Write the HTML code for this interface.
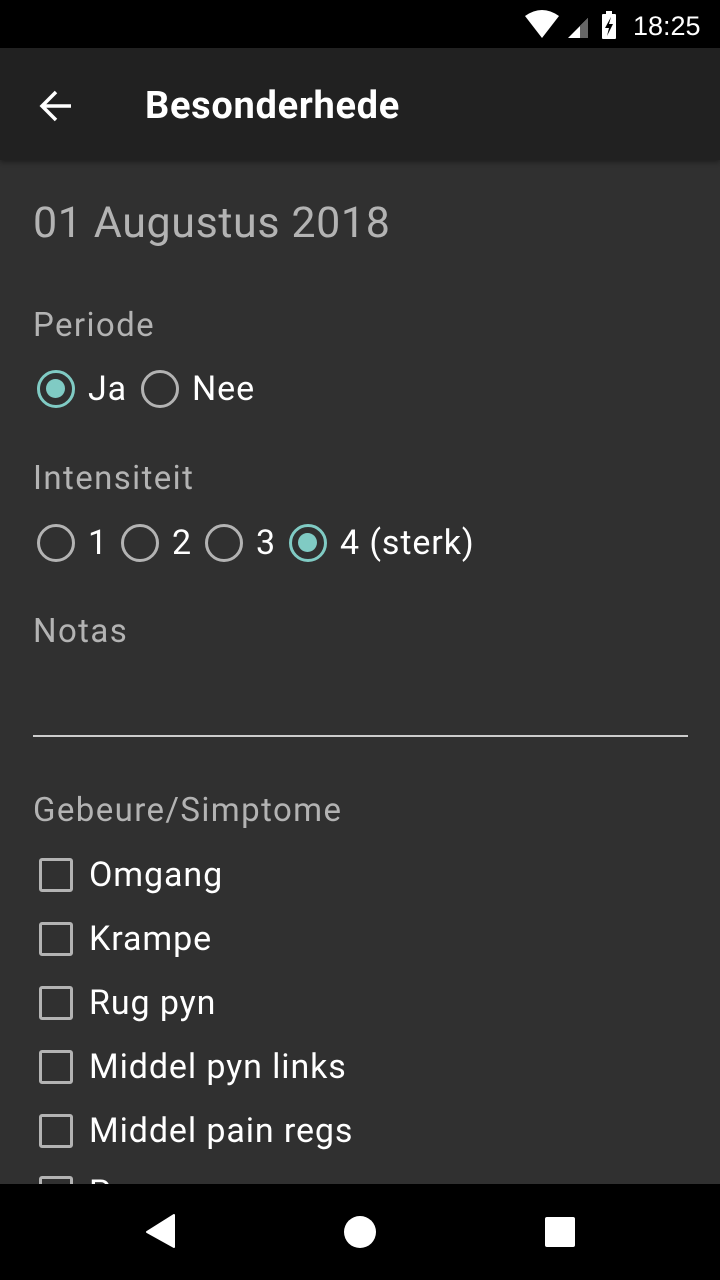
<!DOCTYPE html>
<html><head><meta charset="utf-8"><style>
*{margin:0;padding:0;box-sizing:border-box}
body{width:720px;height:1280px;background:#303030;font-family:"Roboto","Liberation Sans",sans-serif;position:relative;overflow:hidden}
.a{position:absolute;white-space:nowrap}
.lbl{color:#b3b3b3;font-size:33px;letter-spacing:1.4px;line-height:40px}
.t{color:#fff;font-size:34px;letter-spacing:0.9px;line-height:40px}
.r{position:absolute;width:38px;height:38px;border:3.5px solid #b3b3b3;border-radius:50%}
.r.on{border-color:#80cbc4}
.r.on::after{content:"";position:absolute;left:6px;top:6px;width:19px;height:19px;border-radius:50%;background:#80cbc4}
.c{position:absolute;left:39px;width:34px;height:34px;border:3.5px solid #b3b3b3;border-radius:3px}
</style></head><body>
<div class="a" style="left:0;top:0;width:720px;height:48px;background:#000"></div>
<svg class="a" style="left:515px;top:8px" width="200" height="34" viewBox="0 0 200 34">
<path d="M10 8 Q27 -4 44 8 L27 30 Z" fill="#fff"/>
<path d="M53 30 L73 10 L73 30 Z" fill="#fff"/>
<path d="M65 18 L73 10 L73 30 L65 30Z" fill="#666"/>
<rect x="87" y="6" width="14" height="25" rx="1" fill="#fff"/><rect x="91" y="3" width="6" height="4" fill="#fff"/>
<path d="M96 9 L90 20 L94 20 L92 28 L98 16 L94 16 Z" fill="#000"/>
<text x="118" y="27" fill="#fff" font-size="27" font-family="Liberation Sans">18:25</text>
</svg>
<div class="a" style="left:0;top:48px;width:720px;height:112px;background:#212121;box-shadow:0 2px 5px rgba(0,0,0,.4)"></div>
<svg class="a" style="left:38px;top:88px" width="36" height="36" viewBox="0 0 36 36"><path d="M33 18H5M18 4L4 18L18 32" stroke="#fff" stroke-width="3.5" fill="none"/></svg>
<div class="a" style="left:145px;top:84px;color:#fff;font-size:38px;letter-spacing:0.7px;font-weight:bold;line-height:44px">Besonderhede</div>
<div class="a" style="left:33px;top:199px;color:#b3b3b3;font-size:43px;letter-spacing:0.6px;line-height:48px">01 Augustus 2018</div>
<div class="a lbl" style="left:33px;top:306px">Periode</div>
<div class="r on" style="left:37px;top:370px"></div><div class="a t" style="left:88px;top:369px">Ja</div>
<div class="r" style="left:141px;top:370px"></div><div class="a t" style="left:192px;top:369px">Nee</div>
<div class="a lbl" style="left:33px;top:459px">Intensiteit</div>
<div class="r" style="left:37px;top:524px"></div><div class="a t" style="left:88px;top:523px">1</div>
<div class="r" style="left:121px;top:524px"></div><div class="a t" style="left:172px;top:523px">2</div>
<div class="r" style="left:205px;top:524px"></div><div class="a t" style="left:256px;top:523px">3</div>
<div class="r on" style="left:289px;top:524px"></div><div class="a t" style="left:340px;top:523px">4 (sterk)</div>
<div class="a lbl" style="left:33px;top:612px">Notas</div>
<div class="a" style="left:33px;top:735px;width:655px;height:2px;background:#ccc"></div>
<div class="a lbl" style="left:33px;top:791px">Gebeure/Simptome</div>
<div class="c" style="top:858px"></div><div class="a t" style="left:89px;top:855px">Omgang</div>
<div class="c" style="top:922px"></div><div class="a t" style="left:89px;top:919px">Krampe</div>
<div class="c" style="top:986px"></div><div class="a t" style="left:89px;top:983px">Rug pyn</div>
<div class="c" style="top:1050px"></div><div class="a t" style="left:89px;top:1047px">Middel pyn links</div>
<div class="c" style="top:1114px"></div><div class="a t" style="left:89px;top:1111px">Middel pain regs</div>
<div class="c" style="top:1176px"></div><div class="a t" style="left:89px;top:1173px">P</div>
<div class="a" style="left:0;top:1184px;width:720px;height:96px;background:#000"></div>
<svg class="a" style="left:0;top:1184px" width="720" height="96" viewBox="0 0 720 96">
<path d="M174 31 L174 63 L147 48 Z" fill="#fff" stroke="#fff" stroke-width="2" stroke-linejoin="round"/>
<circle cx="360" cy="48" r="16" fill="#fff"/>
<rect x="545" y="33" width="30" height="30" rx="2" fill="#fff"/>
</svg>
</body></html>
